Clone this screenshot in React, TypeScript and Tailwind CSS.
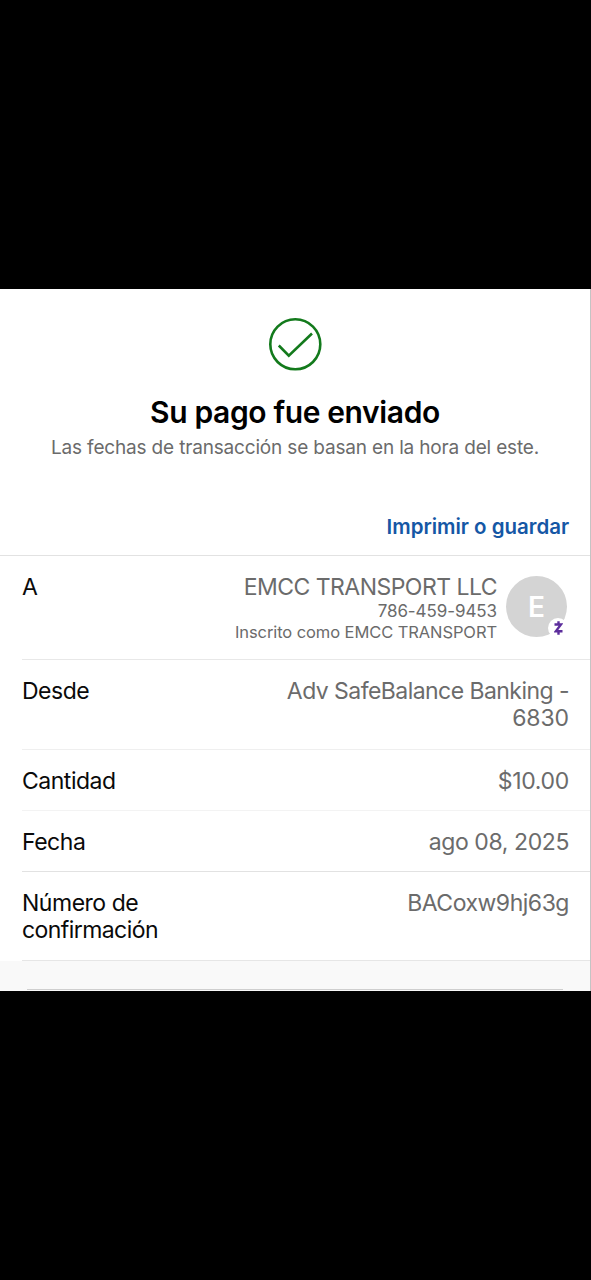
import React from 'react';

function Header() {
  return (
    <div className="flex flex-col items-center pt-[28px] h-[201px]">
      <svg className="w-[54px] h-[54px]" viewBox="0 0 54 54" fill="none" stroke="#137a1c" xmlns="http://www.w3.org/2000/svg">
        <circle cx="27.3" cy="27.3" r="25" strokeWidth="2.6" />
        <path d="M10.8 28.5L20.8 38.7L44 16.5" strokeWidth="2.6" />
      </svg>
      <h1 className="mt-[23px] text-[30px] leading-[36px] font-semibold tracking-[-0.37px] text-black whitespace-nowrap">Su pago fue enviado</h1>
      <p className="mt-[6px] text-[19px] leading-[24px] tracking-[-0.17px] text-[#6b6b6b] whitespace-nowrap">Las fechas de transacción se basan en la hora del este.</p>
    </div>
  );
}

function Avatar() {
  return (
    <div className="relative ml-[9px] mt-[2px] flex size-[61px] items-center justify-center rounded-full bg-[#d4d4d4]">
      <span className="text-[28px] leading-none font-semibold tracking-normal text-white">E</span>
      <span className="absolute left-[42px] top-[42px] flex size-[20px] items-center justify-center rounded-full bg-white">
        <svg className="h-[14px] w-[9px]" viewBox="0 0 9 14" fill="none" stroke="#5c2d9c" strokeWidth="2.4" xmlns="http://www.w3.org/2000/svg">
          <path d="M0.5 3.5H7L1.8 10.3H8.5M4.5 0.3V3M4.5 11V13.7" />
        </svg>
      </span>
    </div>
  );
}

type RowProps = {
  label: React.ReactNode;
  className: string;
  children: React.ReactNode;
};

function Row({ label, className, children }: RowProps) {
  return (
    <div className={`ml-[22px] flex justify-between border-b pr-[21px] pt-[18px] text-[23px] leading-[27.5px] tracking-[-0.48px] ${className}`}>
      <div className="text-[#0a0a0a] whitespace-nowrap">{label}</div>
      <div className="text-right text-[#6b6b6b] whitespace-nowrap">{children}</div>
    </div>
  );
}

function App() {
  return (
    <div className="h-[1280px] w-[591px] overflow-hidden bg-black pt-[289px] font-['Inter',sans-serif]">
      <div className="h-[702px] border-r border-[#c4c4c4] bg-white">
        <Header />
        <div className="flex h-[66px] justify-end border-b border-[#e2e2e2] pr-[21px] pt-[24px]">
          <a href="#guardar" className="text-[20.5px] leading-[26px] font-semibold tracking-[-0.03px] text-[#1557a5] whitespace-nowrap">Imprimir o guardar</a>
        </div>

        <Row label="A" className="h-[104px] border-[#e8e8e8]">
          <div className="flex pr-[2px]">
            <div>
              <p className="tracking-[-0.53px]">EMCC TRANSPORT LLC</p>
              <p className="mt-[-1px] text-[17px] leading-[21px] tracking-[-0.08px]">786-459-9453</p>
              <p className="text-[16.5px] leading-[21px] tracking-[-0.09px]">Inscrito como EMCC TRANSPORT</p>
            </div>
            <Avatar />
          </div>
        </Row>
        <Row label="Desde" className="h-[90px] border-[#efefef]">
          <p className="tracking-[-0.55px]">Adv SafeBalance Banking -</p>
          <p className="mt-[-0.5px] tracking-[-0.1px]">6830</p>
        </Row>
        <Row label="Cantidad" className="h-[61px] border-[#f3f3f3]">
          <p className="tracking-[-0.3px]">$10.00</p>
        </Row>
        <Row label="Fecha" className="h-[61px] border-[#e2e2e2]">
          <p className="tracking-[-0.4px]">ago 08, 2025</p>
        </Row>
        <Row
          label={
            <>
              <p>Número de</p>
              <p className="mt-[-0.5px] tracking-[-0.57px]">confirmación</p>
            </>
          }
          className="h-[89px] border-[#e6e6e6]"
        >
          BACoxw9hj63g
        </Row>

        <div className="h-[30px] bg-[#f9f9f9] px-[27px] pt-[28px]">
          <div className="h-px bg-[#cfcfcf]" />
        </div>
      </div>
    </div>
  );
}

export default App;
